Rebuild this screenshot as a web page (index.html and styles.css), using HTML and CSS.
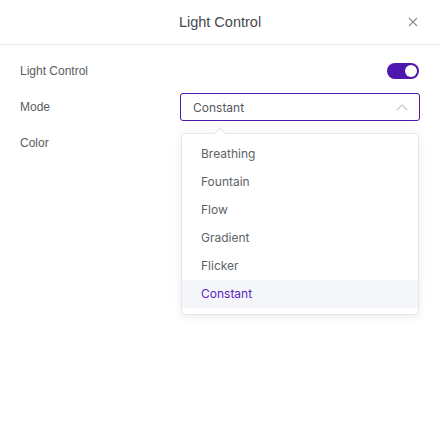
FILE: index.html
```html
<!DOCTYPE html>
<html lang="en">
<head>
  <meta charset="UTF-8">
  <title>Light Control</title>
  <link rel="stylesheet" href="styles.css">
</head>
<body>
  <div class="dialog">
    <div class="dialog-header">
      <span class="dialog-title">Light Control</span>
      <span class="close-btn">
        <svg width="10" height="10" viewBox="0 0 10 10"><path d="M1 1L9 9M9 1L1 9" stroke="#8a8d93" stroke-width="1.1" fill="none"/></svg>
      </span>
    </div>
    <div class="dialog-body">
      <div class="form-row">
        <span class="form-label">Light Control</span>
        <div class="form-field right">
          <span class="switch"><span class="knob"></span></span>
        </div>
      </div>
      <div class="form-row">
        <span class="form-label">Mode</span>
        <div class="form-field">
          <div class="select">
            <span class="select-value">Constant</span>
            <svg class="chevron" width="12" height="8" viewBox="0 0 12 8"><path d="M1 7L6 2L11 7" stroke="#c6c8cc" stroke-width="1.1" fill="none"/></svg>
          </div>
          <div class="dropdown">
            <span class="dropdown-arrow"></span>
            <ul class="dropdown-list">
              <li>Breathing</li>
              <li>Fountain</li>
              <li>Flow</li>
              <li>Gradient</li>
              <li>Flicker</li>
              <li class="selected">Constant</li>
            </ul>
          </div>
        </div>
      </div>
      <div class="form-row">
        <span class="form-label">Color</span>
        <div class="form-field"></div>
      </div>
    </div>
  </div>
</body>
</html>
```

FILE: styles.css
```css
* {
  box-sizing: border-box;
}

body {
  margin: 0;
  background: #fff;
  font-family: "Liberation Sans", Arial, sans-serif;
  color: #606266;
}

.dialog {
  width: 440px;
  height: 436px;
  background: #fff;
}

.dialog-header {
  height: 45px;
  border-bottom: 1px solid #e9eaec;
  display: flex;
  align-items: center;
  justify-content: center;
  position: relative;
}

.dialog-title {
  font-size: 14.5px;
  color: #45484d;
}

.close-btn {
  position: absolute;
  right: 22px;
  top: 17px;
  display: flex;
}

.dialog-body {
  padding: 12px 20px 0;
  display: flex;
  flex-direction: column;
  gap: 8px;
}

.form-row {
  display: grid;
  grid-template-columns: 160px 1fr;
  align-items: center;
  height: 28px;
}

.form-label {
  font-size: 12px;
  color: #5a5d63;
}

.form-field {
  position: relative;
  height: 28px;
  display: flex;
  align-items: center;
}

.form-field.right {
  justify-content: flex-end;
}

.switch {
  width: 32px;
  height: 16px;
  border-radius: 8px;
  background: #4e17ad;
  position: relative;
  margin-right: 1px;
}

.knob {
  position: absolute;
  right: 2px;
  top: 2px;
  width: 12px;
  height: 12px;
  border-radius: 50%;
  background: #fff;
}

.select {
  width: 100%;
  height: 28px;
  border: 1px solid #4e17ad;
  border-radius: 3px;
  display: flex;
  align-items: center;
  justify-content: space-between;
  padding: 0 11px 0 12px;
  font-family: Inter, "Liberation Sans", sans-serif;
  font-size: 12px;
  color: #55585e;
}

.chevron {
  margin-top: -1px;
}

.dropdown {
  position: absolute;
  top: 40px;
  left: 1px;
  width: 238px;
  background: #fff;
  border: 1px solid #e4e7ed;
  border-radius: 4px;
  box-shadow: 0 2px 10px rgba(0, 0, 0, 0.08);
  z-index: 2;
}

.dropdown-arrow {
  position: absolute;
  top: -5px;
  left: 34px;
  width: 8px;
  height: 8px;
  background: #fff;
  border-top: 1px solid #e4e7ed;
  border-left: 1px solid #e4e7ed;
  transform: rotate(45deg);
}

.dropdown-list {
  list-style: none;
  margin: 0;
  padding: 6px 0;
}

.dropdown-list li {
  height: 28px;
  line-height: 28px;
  padding: 0 19px;
  font-family: Inter, "Liberation Sans", sans-serif;
  font-size: 12px;
  color: #606266;
}

.dropdown-list li.selected {
  background: #f5f6fa;
  color: #5a1fbf;
}
```
